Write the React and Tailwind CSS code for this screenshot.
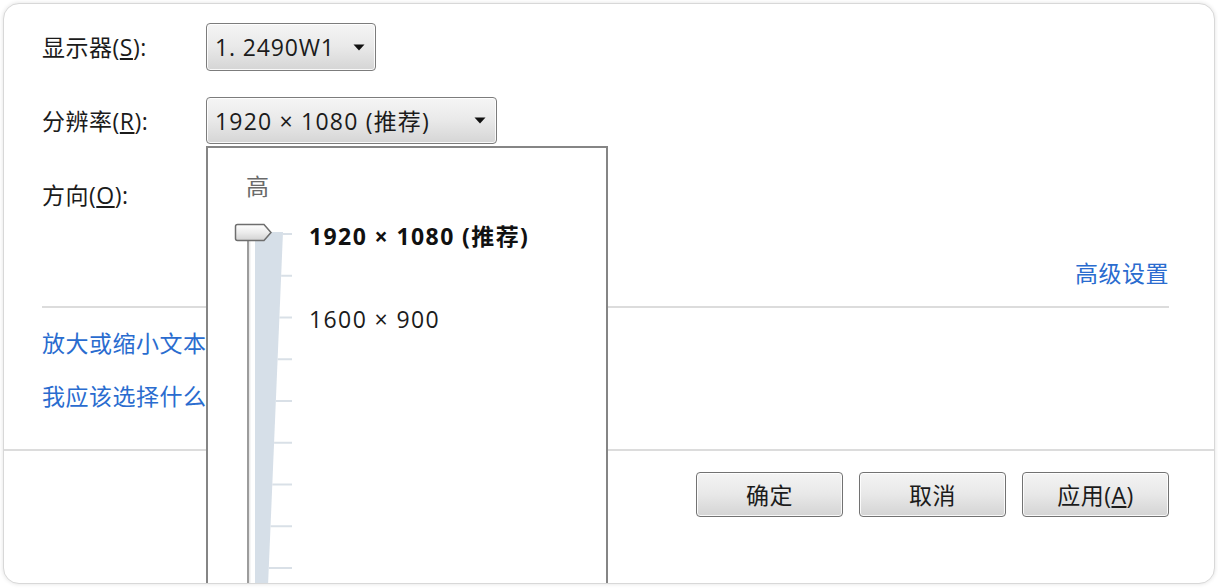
import React from "react";

function Arrow() {
  return (
    <svg width="12" height="7" viewBox="0 0 12 7" className="shrink-0">
      <path d="M0.5 0.5 H11.5 L6 6.5 Z" fill="#111" />
    </svg>
  );
}

function Combo({ className, textClass, children }) {
  return (
    <div
      className={
        "flex items-center justify-between pl-[8px] pr-[10px] rounded-[4px] border border-[#7c7c7c] bg-linear-to-b from-[#f5f5f5] via-[#e9e9e9] to-[#d5d5d5] shadow-[inset_0_0_0_1px_rgba(255,255,255,0.85)] " +
        className
      }
    >
      <span className={"whitespace-nowrap " + textClass}>{children}</span>
      <Arrow />
    </div>
  );
}

function Btn({ children }) {
  return (
    <div className="w-[147px] h-[45px] flex items-center justify-center rounded-[4px] border border-[#727272] bg-linear-to-b from-[#f4f4f4] via-[#e8e8e8] to-[#d4d4d4] shadow-[inset_0_0_0_1px_rgba(255,255,255,0.85)]">
      {children}
    </div>
  );
}

function Slider() {
  const ticks = [];
  for (let k = 0; k < 9; k++) {
    const y = 16 + k * 41.75;
    const xr = 55 - (y - 14) * (15.5 / 366);
    ticks.push(
      <line key={k} x1={xr} y1={y} x2={64} y2={y} stroke="#d9e0e7" strokeWidth="2" />
    );
  }
  return (
    <svg width="80" height="380" viewBox="0 0 80 380" className="absolute left-[20px] top-[70px]">
      <defs>
        <linearGradient id="thumb" x1="0" y1="0" x2="0" y2="1">
          <stop offset="0" stopColor="#ffffff" />
          <stop offset="0.5" stopColor="#ececec" />
          <stop offset="1" stopColor="#d2d2d2" />
        </linearGradient>
      </defs>
      <polygon points="27,14 55,14 39.5,380 27,380" fill="#d6dfe8" />
      {ticks}
      <line x1="20" y1="22" x2="20" y2="380" stroke="#9c9c9c" strokeWidth="2" />
      <line x1="21.8" y1="22" x2="21.8" y2="380" stroke="#dedede" strokeWidth="1" />
      <path
        d="M9.5 6.5 H36 L43 14.5 L36 22.5 H9.5 Q7.5 22.5 7.5 20.5 V8.5 Q7.5 6.5 9.5 6.5 Z"
        fill="url(#thumb)"
        stroke="#6e6e6e"
        strokeWidth="1.5"
      />
    </svg>
  );
}

export default function App() {
  return (
    <div className="w-[1218px] h-[588px] bg-white p-[3px] font-['Open_Sans','Noto_Sans_CJK_SC',sans-serif] text-[23px] tracking-[0.5px] text-[#1b1b1b] leading-[30px]">
      <div className="relative h-[581px] rounded-[16px] border border-[#d8d8d8] shadow-[0_0_4px_rgba(0,0,0,0.12)] bg-white overflow-hidden flex flex-col">
        <div className="h-[445px] pl-[38px] pr-[45px] pt-[19px] flex flex-col">
          <div className="flex items-center h-[48px]">
            <div className="w-[164px]">
              显示器(<span className="underline underline-offset-2">S</span>):
            </div>
            <Combo className="w-[170px] h-[48px]" textClass="tracking-[0.85px]">1. 2490W1</Combo>
          </div>
          <div className="flex items-center h-[47px] mt-[26px]">
            <div className="w-[164px]">
              分辨率(<span className="underline underline-offset-2">R</span>):
            </div>
            <Combo className="w-[291px] h-[47px]" textClass="tracking-[1.2px]">1920 × 1080 (推荐)</Combo>
          </div>
          <div className="flex items-center h-[47px] mt-[27px]">
            <div className="w-[164px]">
              方向(<span className="underline underline-offset-2">O</span>):
            </div>
          </div>
          <div className="flex justify-end items-center h-[30px] mt-[40px] text-[#2a6ccf]">
            高级设置
          </div>
          <div className="h-[2px] mt-[18px] bg-[#dcdcdc]" />
          <div className="h-[30px] mt-[20px] text-[#2a6ccf]">放大或缩小文本和其他项目</div>
          <div className="h-[30px] mt-[23px] text-[#2a6ccf]">我应该选择什么显示器设置?</div>
        </div>
        <div className="flex-1 border-t-2 border-[#dcdcdc] flex justify-end gap-4 pr-[45px] pt-[21px]">
          <Btn>确定</Btn>
          <Btn>取消</Btn>
          <Btn>
            <span>
              应用(<span className="underline underline-offset-2">A</span>)
            </span>
          </Btn>
        </div>

        <div className="absolute left-[202px] top-[142px] w-[402px] h-[460px] border-2 border-[#858585] bg-white">
          <Slider />
          <div className="pl-[38px] pt-[23px] h-[53px] text-[#6a6a6a]">高</div>
          <div className="pl-[101px] mt-[20px] h-[30px] font-bold tracking-[1.4px] text-[#111] whitespace-nowrap">
            1920 × 1080 (推荐)
          </div>
          <div className="pl-[101px] mt-[53px] h-[30px] tracking-[1.4px] text-[#1b1b1b] whitespace-nowrap">
            1600 × 900
          </div>
        </div>
      </div>
    </div>
  );
}
